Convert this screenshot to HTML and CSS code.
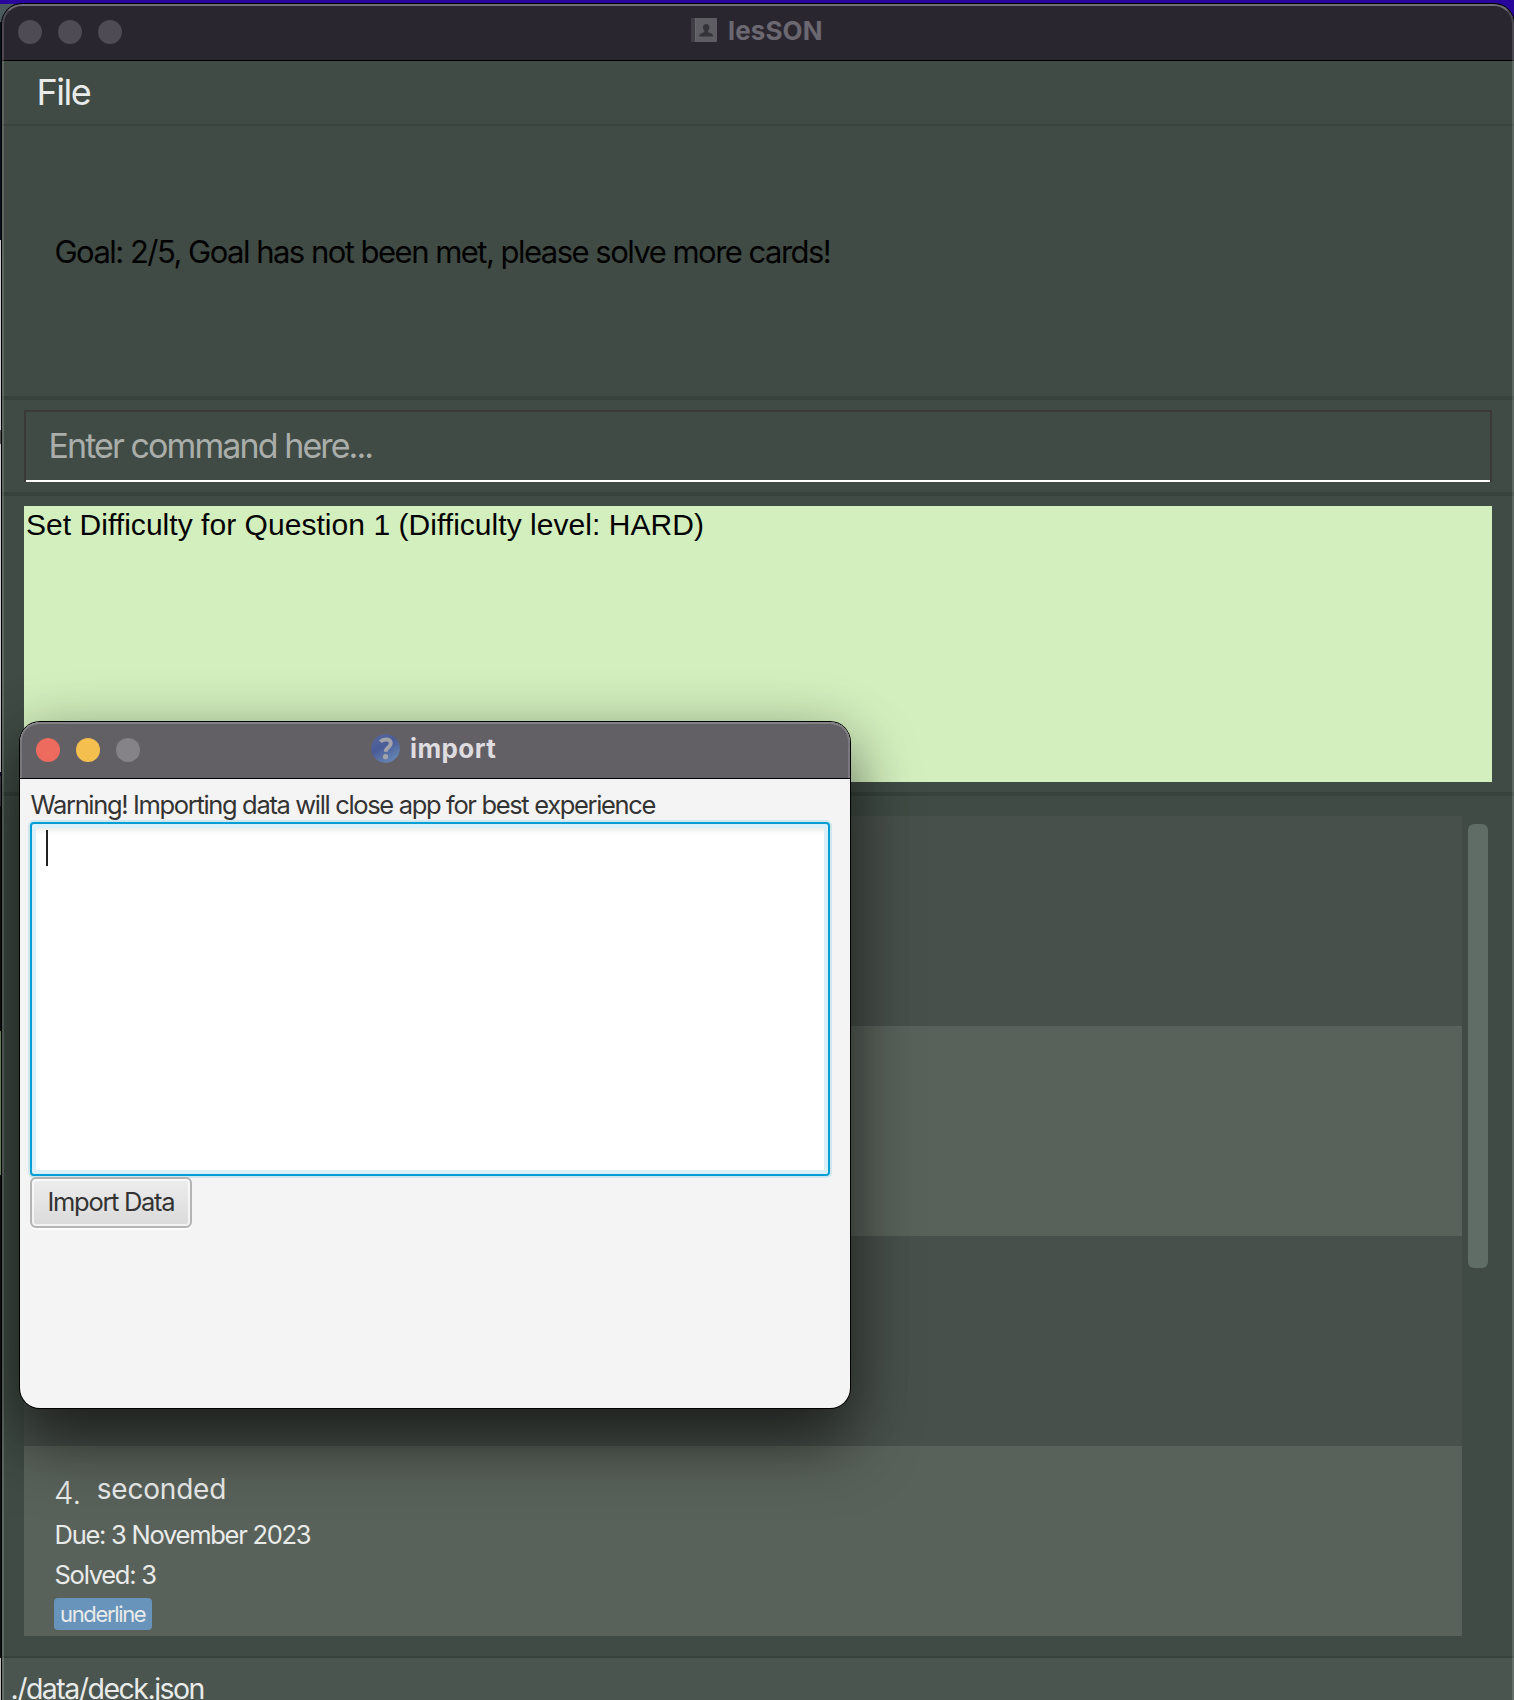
FILE: index.html
```html
<!DOCTYPE html>
<html lang="en">
<head>
<meta charset="utf-8">
<title>lesSON</title>
<link rel="stylesheet" href="styles.css">
</head>
<body>
<div class="desktop"></div>
<main class="window">
  <header class="titlebar">
    <div class="lights"><i></i><i></i><i></i></div>
    <div class="title">
      <svg class="book" width="26" height="24" viewBox="0 0 26 24"><rect width="26" height="24" rx="1" fill="#5f5d64"/><rect width="4" height="24" fill="#413f46"/><rect x="4" width="1" height="24" fill="#69676e"/><path d="M15.200 6c2 0 3.200 1.500 3.200 3.500 0 1.500-.7 2.600-1.300 3.300v1.500c2.400.6 5 1.500 5 4.200H8.300c0-2.700 2.600-3.600 5-4.200v-1.500c-.6-.7-1.300-1.800-1.300-3.300C12 7.500 13.200 6 15.200 6z" fill="#36343b"/></svg>
      <span>lesSON</span>
    </div>
  </header>
  <nav class="menu">File</nav>
  <section class="goal">Goal: 2/5, Goal has not been met, please solve more cards!</section>
  <section class="command"><div class="field">Enter command here...</div></section>
  <section class="result"><div class="output">Set Difficulty for Question 1 (Difficulty level: HARD)</div></section>
  <section class="deck">
    <div class="list">
      <div class="row"></div>
      <div class="row alt"></div>
      <div class="row"></div>
      <article class="row alt card">
        <div class="heading"><span class="num">4.</span><span class="question">seconded</span></div>
        <div class="line">Due: 3 November 2023</div>
        <div class="line">Solved: 3</div>
        <div class="tag">underline</div>
      </article>
    </div>
    <div class="scroll"></div>
  </section>
  <footer class="status">./data/deck.json</footer>
</main>
<div class="dialog">
  <header class="dialog-bar">
    <div class="lights"><i class="red"></i><i class="yellow"></i><i class="grey"></i></div>
    <div class="title">
      <svg width="29" height="29" viewBox="0 0 29 29"><defs><linearGradient id="g" x1="0" y1="0" x2=".6" y2="1"><stop offset="0" stop-color="#5667a0"/><stop offset=".5" stop-color="#4a5c98"/><stop offset="1" stop-color="#6484b4"/></linearGradient></defs><circle cx="14.500" cy="14.500" r="14.300" fill="url(#g)"/><path d="M9.300 7.800C12.500 4.300 19.800 4.600 19.800 9.300c0 4-5.100 3.900-5.100 8.500" fill="none" stroke="#a3a2a8" stroke-width="3.900"/><circle cx="14.500" cy="22.700" r="2.600" fill="#a3a2a8"/></svg>
      <span>import</span>
    </div>
  </header>
  <div class="dialog-body">
    <div class="warning">Warning! Importing data will close app for best experience</div>
    <div class="textarea"><div class="caret"></div></div>
    <div class="button">Import Data</div>
  </div>
</div>
</body>
</html>
```
FILE: styles.css
```css
* { box-sizing: border-box; }
body {
  margin: 0;
  width: 1514px;
  height: 1700px;
  overflow: hidden;
  position: relative;
  background: #28069c;
  font-family: Inter, "Liberation Sans", sans-serif;
  color: #e9ebea;
  white-space: nowrap;
}

/* slice of the desktop behind the window */
.desktop {
  position: absolute;
  left: 0;
  top: 4px;
  width: 30px;
  height: 1696px;
  background: linear-gradient(#4b5a5c 0 18px, #03111a 18px 236px, #c5c8cc 236px 426px, #555 426px 440px, #c8c8cc 440px 768px, #15122f 768px 772px, #3d3e47 772px 802px, #0d1413 802px 1027px, #7f9a68 1027px 1171px, #0c1112 1171px 1654px, #bbb 1654px);
}
.window {
  position: absolute;
  left: 2px;
  top: 4px;
  width: 1512px;
  height: 1696px;
  display: flex;
  flex-direction: column;
  overflow: hidden;
  border-radius: 20px 20px 0 0;
  background: #3f4b44;
  box-shadow: 0 0 0 1px #000;
}
.window::after {
  content: "";
  position: absolute;
  inset: 0 0 -20px;
  border: 2px solid rgba(255, 255, 255, .16);
  border-top-color: rgba(255, 255, 255, .33);
  border-radius: 20px 20px 0 0;
}
.titlebar {
  flex: none;
  height: 57px;
  background: #2a2630;
  border-bottom: 1px solid #000;
  position: relative;
}
.lights { display: flex; gap: 16px; }
.lights i { width: 24px; height: 24px; border-radius: 50%; background: #4e4b55; }
.titlebar .lights { padding: 16px; }
.title {
  position: absolute;
  inset: 0;
  display: flex;
  align-items: center;
  font-weight: 700;
  font-size: 26px;
}
.titlebar .title { padding: 0 0 4px 689px; gap: 11px; color: #6b6871; letter-spacing: .1px; }
.menu {
  flex: none;
  height: 65px;
  border-bottom: 2px solid #36423b;
  padding: 9px 0 0 34.500px;
  font-size: 36px;
  line-height: 44px;
  letter-spacing: -1.500px;
}
.goal {
  flex: none;
  height: 274px;
  border-bottom: 4px solid #36423b;
  padding: 106px 0 0 52.500px;
  color: #000;
  font-size: 31px;
  line-height: 40px;
  letter-spacing: -1.520px;
}
.command { flex: none; height: 96px; padding: 10px 20px 0 22px; border-bottom: 4px solid #36423b; }
.field {
  width: 1468px;
  height: 72px;
  border: 2px solid #3b3937;
  border-bottom: 0;
  box-shadow: inset 0 -2px 0 #fff;
  padding: 13px 0 0 22.500px;
  color: #aaaeab;
  font-size: 34px;
  line-height: 42px;
  letter-spacing: -1.910px;
}
.result { flex: none; height: 300px; padding: 10px 22px 0; border-bottom: 4px solid #36423b; }
.output {
  width: 1468px;
  height: 276px;
  background: #d3efbe;
  color: #000;
  padding-left: 2px;
  font: 30px/38px "Liberation Sans", Arial, sans-serif;
  letter-spacing: .04px;
}
.deck { flex: none; height: 862px; padding: 20px 0 0 22px; display: flex; gap: 6px; border-bottom: 2px solid #36423b; }
.list { width: 1438px; height: 820px; overflow: hidden; }
.row { height: 210px; background: #48504b; }
.row.alt { background: #59625a; }
.card { padding: 25px 0 0 30px; }
.heading { display: flex; gap: 15.500px; height: 44px; }
.num { font-size: 31px; line-height: 44px; font-weight: 300; }
.question { font-size: 28px; line-height: 36px; letter-spacing: -.2px; }
.line { font-size: 25.500px; line-height: 40px; height: 40px; letter-spacing: -1.260px; padding-left: .5px; }
.tag {
  width: 98px;
  height: 32px;
  margin-top: 3px;
  border-radius: 4px;
  padding-left: 6px;
  background: #6893ba;
  font-size: 22px;
  line-height: 32px;
  letter-spacing: -1.350px;
}
.scroll { width: 20px; height: 444px; margin-top: 8px; border-radius: 6px; background: #5f6d66; }
.status { flex: 1; background: #49554e; padding: 11px 0 0 8.500px; font-size: 28.500px; line-height: 40px; letter-spacing: -1.520px; }

.dialog {
  position: absolute;
  left: 20px;
  top: 722px;
  width: 830px;
  height: 686px;
  border-radius: 20px;
  overflow: hidden;
  background: #f4f4f4;
  color: #333;
  box-shadow: 0 0 0 1px #000, 0 36px 64px rgba(0, 0, 0, .5), 0 8px 60px rgba(0, 0, 0, .22);
}
.dialog-bar {
  position: relative;
  height: 57px;
  background: #636065;
  border-bottom: 1px solid #000;
  border-radius: 20px 20px 0 0;
  box-shadow: inset 0 2px 0 #828084, inset 2px 0 0 #7a787d, inset -2px 0 0 #7a787d;
}
.dialog-bar .lights { padding: 16px; }
.lights .red { background: #ed6a5e; }
.lights .yellow { background: #f5bf4f; }
.lights .grey { background: #858387; }
.dialog-bar .title { padding: 0 0 4px 351px; gap: 10px; color: #dfdce0; letter-spacing: .4px; }
.dialog-body { padding: 8px 10px; font-size: 25.500px; }
.warning { height: 35px; line-height: 36px; letter-spacing: -1.340px; padding-left: .5px; }
.textarea {
  width: 800px;
  height: 354px;
  border: 2px solid #039ed3;
  border-radius: 4px;
  background: #fff;
  box-shadow: 0 0 0 2px #cfe7ef, inset 0 0 0 4px #dbf1f9, inset 0 9px 5px -2px #eee;
  padding: 6px 0 0 14px;
}
.caret { width: 2px; height: 36px; background: #222; }
.button {
  width: 162px;
  height: 51px;
  margin-top: 1px;
  border: 2px solid #b4b4b4;
  border-radius: 6px;
  background: linear-gradient(#ededed, #dadada);
  box-shadow: inset 0 0 0 2px rgba(255, 255, 255, .65), 0 2px 0 #fbfbfb;
  padding-left: 15.500px;
  line-height: 46px;
  letter-spacing: -1.300px;
}
```
